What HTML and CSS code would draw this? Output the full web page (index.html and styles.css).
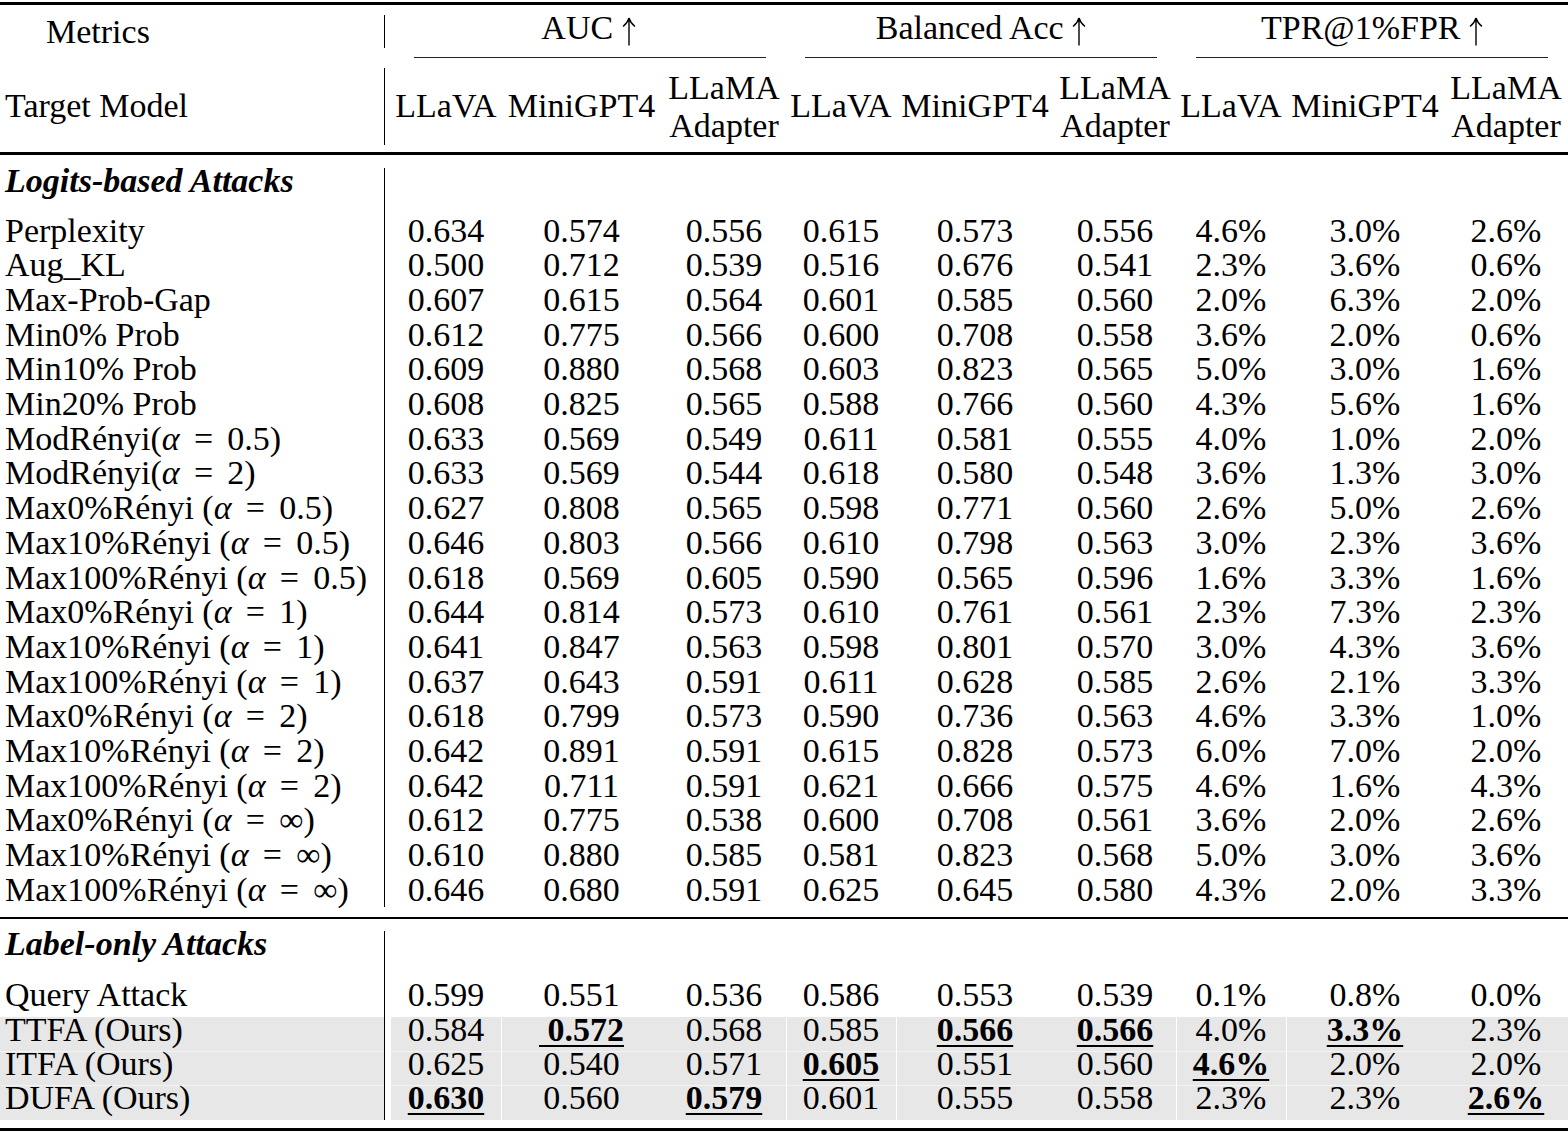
FILE: index.html
```html
<!DOCTYPE html>
<html lang="en">
<head>
    <meta charset="UTF-8">
    <meta name="viewport" content="width=device-width, initial-scale=1.0">
    <title>Membership Inference Results</title>
    <link rel="stylesheet" href="styles.css">
</head>
<body>

<div class="sheet">
    <div class="rule top"></div>

    <!-- Metric groups -->
    <div class="row groups">
        <div class="name metrics">Metrics</div>
        <div class="group">AUC <svg class="up" viewBox="0 0 14 29"><path d="M7 28.5V2 M7 1 Q5.5 6 1 9.5 M7 1 Q8.5 6 13 9.5"/></svg></div>
        <div class="group">Balanced Acc <svg class="up" viewBox="0 0 14 29"><path d="M7 28.5V2 M7 1 Q5.5 6 1 9.5 M7 1 Q8.5 6 13 9.5"/></svg></div>
        <div class="group">TPR@1%FPR <svg class="up" viewBox="0 0 14 29"><path d="M7 28.5V2 M7 1 Q5.5 6 1 9.5 M7 1 Q8.5 6 13 9.5"/></svg></div>
    </div>
    <div class="row trims">
        <div></div>
        <div class="trim t1"></div>
        <div class="trim t2"></div>
        <div class="trim t3"></div>
    </div>

    <!-- Target models -->
    <div class="row models">
        <div class="name">Target Model</div>
        <div>LLaVA</div><div>MiniGPT4</div><div class="two"><span>LLaMA</span><span>Adapter</span></div>
        <div>LLaVA</div><div>MiniGPT4</div><div class="two"><span>LLaMA</span><span>Adapter</span></div>
        <div>LLaVA</div><div>MiniGPT4</div><div class="two"><span>LLaMA</span><span>Adapter</span></div>
    </div>

    <div class="rule mid"></div>

    <!-- Logits-based attacks -->
    <div class="row section"><div class="name"><b><i>Logits-based Attacks</i></b></div></div>
    <div class="row"><div class="name">Perplexity</div><div>0.634</div><div>0.574</div><div>0.556</div><div>0.615</div><div>0.573</div><div>0.556</div><div>4.6%</div><div>3.0%</div><div>2.6%</div></div>
    <div class="row"><div class="name">Aug_KL</div><div>0.500</div><div>0.712</div><div>0.539</div><div>0.516</div><div>0.676</div><div>0.541</div><div>2.3%</div><div>3.6%</div><div>0.6%</div></div>
    <div class="row"><div class="name">Max-Prob-Gap</div><div>0.607</div><div>0.615</div><div>0.564</div><div>0.601</div><div>0.585</div><div>0.560</div><div>2.0%</div><div>6.3%</div><div>2.0%</div></div>
    <div class="row"><div class="name">Min0% Prob</div><div>0.612</div><div>0.775</div><div>0.566</div><div>0.600</div><div>0.708</div><div>0.558</div><div>3.6%</div><div>2.0%</div><div>0.6%</div></div>
    <div class="row"><div class="name">Min10% Prob</div><div>0.609</div><div>0.880</div><div>0.568</div><div>0.603</div><div>0.823</div><div>0.565</div><div>5.0%</div><div>3.0%</div><div>1.6%</div></div>
    <div class="row"><div class="name">Min20% Prob</div><div>0.608</div><div>0.825</div><div>0.565</div><div>0.588</div><div>0.766</div><div>0.560</div><div>4.3%</div><div>5.6%</div><div>1.6%</div></div>
    <div class="row"><div class="name">ModRényi<span class="math">(<i>α</i><span class="eq">=</span>0.5)</span></div><div>0.633</div><div>0.569</div><div>0.549</div><div>0.611</div><div>0.581</div><div>0.555</div><div>4.0%</div><div>1.0%</div><div>2.0%</div></div>
    <div class="row"><div class="name">ModRényi<span class="math">(<i>α</i><span class="eq">=</span>2)</span></div><div>0.633</div><div>0.569</div><div>0.544</div><div>0.618</div><div>0.580</div><div>0.548</div><div>3.6%</div><div>1.3%</div><div>3.0%</div></div>
    <div class="row"><div class="name">Max0%Rényi <span class="math">(<i>α</i><span class="eq">=</span>0.5)</span></div><div>0.627</div><div>0.808</div><div>0.565</div><div>0.598</div><div>0.771</div><div>0.560</div><div>2.6%</div><div>5.0%</div><div>2.6%</div></div>
    <div class="row"><div class="name">Max10%Rényi <span class="math">(<i>α</i><span class="eq">=</span>0.5)</span></div><div>0.646</div><div>0.803</div><div>0.566</div><div>0.610</div><div>0.798</div><div>0.563</div><div>3.0%</div><div>2.3%</div><div>3.6%</div></div>
    <div class="row"><div class="name">Max100%Rényi <span class="math">(<i>α</i><span class="eq">=</span>0.5)</span></div><div>0.618</div><div>0.569</div><div>0.605</div><div>0.590</div><div>0.565</div><div>0.596</div><div>1.6%</div><div>3.3%</div><div>1.6%</div></div>
    <div class="row"><div class="name">Max0%Rényi <span class="math">(<i>α</i><span class="eq">=</span>1)</span></div><div>0.644</div><div>0.814</div><div>0.573</div><div>0.610</div><div>0.761</div><div>0.561</div><div>2.3%</div><div>7.3%</div><div>2.3%</div></div>
    <div class="row"><div class="name">Max10%Rényi <span class="math">(<i>α</i><span class="eq">=</span>1)</span></div><div>0.641</div><div>0.847</div><div>0.563</div><div>0.598</div><div>0.801</div><div>0.570</div><div>3.0%</div><div>4.3%</div><div>3.6%</div></div>
    <div class="row"><div class="name">Max100%Rényi <span class="math">(<i>α</i><span class="eq">=</span>1)</span></div><div>0.637</div><div>0.643</div><div>0.591</div><div>0.611</div><div>0.628</div><div>0.585</div><div>2.6%</div><div>2.1%</div><div>3.3%</div></div>
    <div class="row"><div class="name">Max0%Rényi <span class="math">(<i>α</i><span class="eq">=</span>2)</span></div><div>0.618</div><div>0.799</div><div>0.573</div><div>0.590</div><div>0.736</div><div>0.563</div><div>4.6%</div><div>3.3%</div><div>1.0%</div></div>
    <div class="row"><div class="name">Max10%Rényi <span class="math">(<i>α</i><span class="eq">=</span>2)</span></div><div>0.642</div><div>0.891</div><div>0.591</div><div>0.615</div><div>0.828</div><div>0.573</div><div>6.0%</div><div>7.0%</div><div>2.0%</div></div>
    <div class="row"><div class="name">Max100%Rényi <span class="math">(<i>α</i><span class="eq">=</span>2)</span></div><div>0.642</div><div>0.711</div><div>0.591</div><div>0.621</div><div>0.666</div><div>0.575</div><div>4.6%</div><div>1.6%</div><div>4.3%</div></div>
    <div class="row"><div class="name">Max0%Rényi <span class="math">(<i>α</i><span class="eq">=</span>∞)</span></div><div>0.612</div><div>0.775</div><div>0.538</div><div>0.600</div><div>0.708</div><div>0.561</div><div>3.6%</div><div>2.0%</div><div>2.6%</div></div>
    <div class="row"><div class="name">Max10%Rényi <span class="math">(<i>α</i><span class="eq">=</span>∞)</span></div><div>0.610</div><div>0.880</div><div>0.585</div><div>0.581</div><div>0.823</div><div>0.568</div><div>5.0%</div><div>3.0%</div><div>3.6%</div></div>
    <div class="row"><div class="name">Max100%Rényi <span class="math">(<i>α</i><span class="eq">=</span>∞)</span></div><div>0.646</div><div>0.680</div><div>0.591</div><div>0.625</div><div>0.645</div><div>0.580</div><div>4.3%</div><div>2.0%</div><div>3.3%</div></div>

    <div class="rule sep"></div>

    <!-- Label-only attacks (ours are shaded) -->
    <div class="row section"><div class="name"><b><i>Label-only Attacks</i></b></div></div>
    <div class="row query"><div class="name">Query Attack</div><div>0.599</div><div>0.551</div><div>0.536</div><div>0.586</div><div>0.553</div><div>0.539</div><div>0.1%</div><div>0.8%</div><div>0.0%</div></div>
    <div class="row hl"><div class="name">TTFA (Ours)</div><div>0.584</div><div class="gl"><b class="best">&nbsp;0.572</b></div><div>0.568</div><div class="gl">0.585</div><div class="gl"><b class="best">0.566</b></div><div><b class="best">0.566</b></div><div class="gl">4.0%</div><div class="gl"><b class="best">3.3%</b></div><div>2.3%</div></div>
    <div class="row hl"><div class="name">ITFA (Ours)</div><div>0.625</div><div class="gl">0.540</div><div>0.571</div><div class="gl"><b class="best">0.605</b></div><div class="gl">0.551</div><div>0.560</div><div class="gl"><b class="best">4.6%</b></div><div class="gl">2.0%</div><div>2.0%</div></div>
    <div class="row hl"><div class="name">DUFA (Ours)</div><div><b class="best">0.630</b></div><div class="gl">0.560</div><div><b class="best">0.579</b></div><div class="gl">0.601</div><div class="gl">0.555</div><div>0.558</div><div class="gl">2.3%</div><div class="gl">2.3%</div><div><b class="best">2.6%</b></div></div>

    <div class="rule bottom"></div>
</div>

</body>
</html>
```

FILE: styles.css
```css
body {
    margin: 0;
    background-color: #fff;
    color: #000;
    font-family: "Liberation Serif", "Times New Roman", serif;
    font-size: 34px;
}
.sheet {
    width: 1568px;
}
.rule {
    background-color: #000;
}
.rule.top {
    height: 3px;
    margin: 2px 0 10px;
}
.rule.mid {
    height: 3px;
    margin: 7px 0 13px;
}
.rule.sep {
    height: 2px;
    margin: 10px 0 12px;
}
.rule.bottom {
    height: 3px;
    margin-top: 8px;
}
.row {
    display: grid;
    grid-template-columns: 391px 110px 161px 124px 110px 158px 122px 110px 158px 124px;
    line-height: 34.68px;
    white-space: nowrap;
}
.row > div {
    text-align: center;
}
.row > .name {
    text-align: left;
    padding-left: 5px;
    margin-right: 6px;
    border-right: 1px solid #000;
}
.eq {
    margin: 0 0.42em;
}

/* header rows */
.groups {
    height: 33px;
    line-height: 33px;
}
.groups .group {
    grid-column: span 3;
    height: 25.5px;
    line-height: 25.5px;
    padding-bottom: 7.5px;
}
.groups .metrics {
    padding-left: 46px;
}
.up {
    width: 14px;
    height: 29px;
    vertical-align: -7px;
    fill: none;
    stroke: #000;
    stroke-width: 1.4;
}
.trims {
    height: 20px;
}
.trim {
    grid-column: span 3;
    height: 1px;
    margin-top: 9px;
    background-color: #222;
}
.t1 {
    margin-left: 23px;
    margin-right: 20px;
}
.t2 {
    margin-left: 19px;
    margin-right: 19px;
}
.t3 {
    margin-left: 20px;
    margin-right: 20px;
}
.models {
    height: 77px;
}
.models > div {
    display: flex;
    align-items: center;
    justify-content: center;
}
.models > .name {
    justify-content: flex-start;
}
.models > .two {
    flex-direction: column;
    line-height: 38px;
}

/* section titles */
.section > .name {
    line-height: 25.6px;
    padding-bottom: 20.05px;
}
.query > div {
    line-height: 35px;
    padding-bottom: 4.65px;
}
.hl > div {
    line-height: 25.6px;
    padding-bottom: 8.73px;
    background-color: #e7e7e7;
}
.hl > .gl {
    box-shadow: inset 1px 0 #fff;
}
.hl + .hl > div {
    box-shadow: inset 0 1px #f3f3f3;
}
.hl + .hl > .gl {
    box-shadow: inset 1px 0 #fff, inset 0 1px #f3f3f3;
}
.best {
    text-decoration: underline;
    text-decoration-thickness: 2px;
    text-underline-offset: 4px;
}
```
